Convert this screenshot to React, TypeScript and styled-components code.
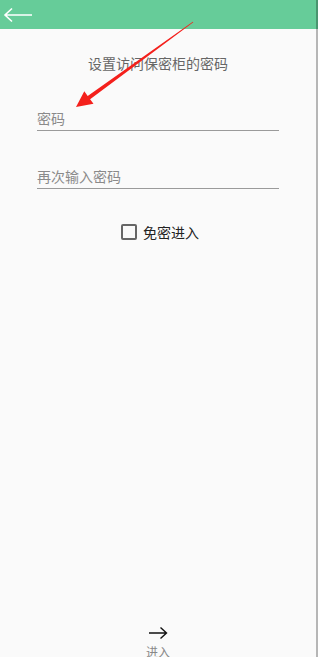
import React from 'react';
import styled, { createGlobalStyle } from 'styled-components';

const GlobalStyle = createGlobalStyle`
  html, body {
    margin: 0;
    padding: 0;
    overflow: hidden;
    background: #fafafa;
  }
  body {
    font-family: "Noto Sans CJK SC", "Noto Sans", sans-serif;
  }
`;

const Page = styled.div`
  position: relative;
  width: 318px;
  height: 662px;
  display: flex;
  flex-direction: column;
  background: #fafafa;

  &::after {
    content: '';
    position: absolute;
    top: 0;
    right: 0;
    bottom: 0;
    width: 2px;
    background: rgba(0, 0, 0, 0.27);
  }
`;

const Header = styled.header`
  height: 29px;
  background: #66cc99;
  display: flex;
  align-items: center;
  padding-left: 3px;
`;

const BackButton = styled.button`
  border: 0;
  background: transparent;
  padding: 0;
  width: 30px;
  height: 16px;
  display: flex;
  align-items: center;
`;

const Main = styled.main`
  flex: 1;
  display: flex;
  flex-direction: column;
  padding: 0 39px 0 37px;
`;

const Title = styled.h1`
  margin: 24px 0 0;
  font-size: 14px;
  line-height: 20px;
  font-weight: normal;
  color: #666;
  text-align: center;
`;

const Field = styled.input<{ $gap: number }>`
  margin-top: ${(p) => p.$gap}px;
  width: 100%;
  box-sizing: border-box;
  height: 23px;
  padding: 0 0 2px;
  border: 0;
  border-bottom: 1px solid #9a9a9a;
  background: transparent;
  font-family: inherit;
  font-size: 14px;
  line-height: 20px;
  color: #222;
  outline: none;

  &::placeholder {
    color: #8a8a8a;
  }
`;

const CheckRow = styled.label`
  margin-top: 32px;
  align-self: center;
  display: flex;
  align-items: center;
  gap: 6px;
  height: 21px;
  font-size: 14px;
  color: #222;
  margin-left: 4px;
`;

const Box = styled.span`
  width: 12px;
  height: 12px;
  border: 2px solid #666;
  border-radius: 2px;
`;

const Footer = styled.footer`
  display: flex;
  flex-direction: column;
  align-items: center;
  gap: 5px;
  padding-bottom: 3px;
  padding-right: 2px;
`;

const EnterLabel = styled.span`
  font-size: 12px;
  line-height: 14px;
  color: #888;
`;

const Annotation = styled.svg`
  position: absolute;
  left: 0;
  top: 0;
  pointer-events: none;
`;

export default function App() {
  return (
    <>
      <GlobalStyle />
      <Page>
        <Header>
          <BackButton aria-label="back">
            <svg width="30" height="16" viewBox="0 0 30 16">
              <path
                d="M2 8 H29 M9 1.5 L2 8 L9 14.5"
                fill="none"
                stroke="#fff"
                strokeWidth="1.6"
              />
            </svg>
          </BackButton>
        </Header>
        <Main>
          <Title>设置访问保密柜的密码</Title>
          <Field $gap={35} type="password" placeholder="密码" />
          <Field $gap={35} type="password" placeholder="再次输入密码" />
          <CheckRow>
            <Box />
            免密进入
          </CheckRow>
        </Main>
        <Footer>
          <svg width="20" height="14" viewBox="0 0 20 14">
            <path
              d="M1 7 H18.5 M12.5 1.5 L18.5 7 L12.5 12.5"
              fill="none"
              stroke="#111"
              strokeWidth="1.4"
            />
          </svg>
          <EnterLabel>进入</EnterLabel>
        </Footer>
        <Annotation width="318" height="130" viewBox="0 0 318 130">
          <polygon
            points="76,107 93.5,103.8 90.1,99.2 193.3,22.3 192.8,21.7 87.7,96 84.3,91.3"
            fill="#f4201c"
          />
        </Annotation>
      </Page>
    </>
  );
}
